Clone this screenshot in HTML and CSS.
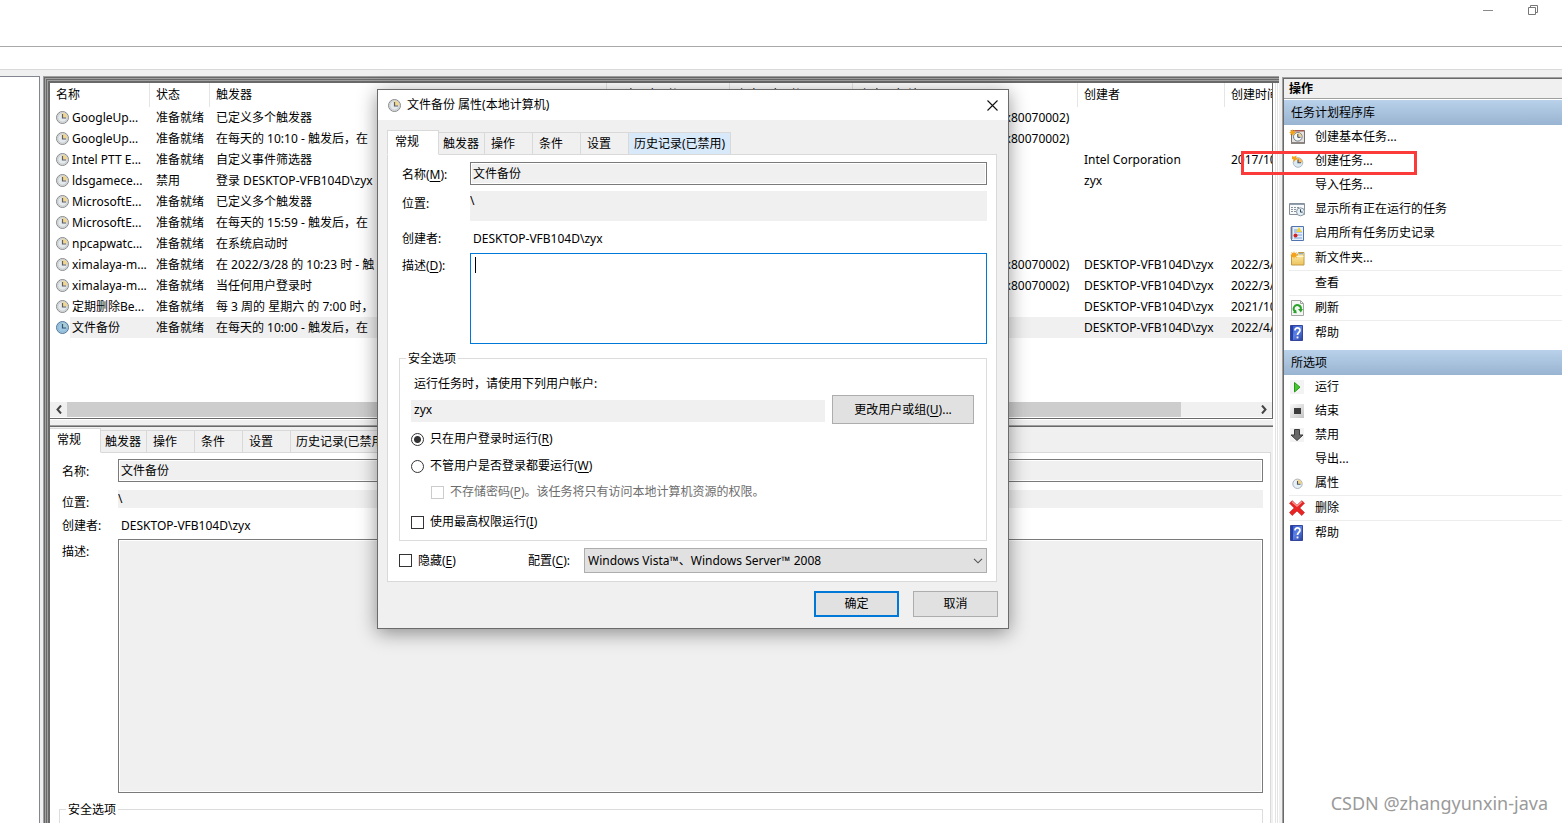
FILE: index.html
```html
<!DOCTYPE html>
<html lang="zh-CN">
<head>
<meta charset="utf-8">
<title>任务计划程序</title>
<link rel="stylesheet" href="styles.css">
</head>
<body>
<svg class="defs" width="0" height="0" aria-hidden="true">
  <linearGradient id="gold" x1="0" y1="0" x2="0" y2="1"><stop offset="0" stop-color="#fdf0b8"/><stop offset="1" stop-color="#eec35a"/></linearGradient>
  <linearGradient id="blue" x1="0" y1="0" x2="1" y2="1"><stop offset="0" stop-color="#2b50c8"/><stop offset=".5" stop-color="#5b82e4"/><stop offset="1" stop-color="#2a3f9c"/></linearGradient>
  <linearGradient id="grey" x1="0" y1="0" x2="1" y2="1"><stop offset="0" stop-color="#fafafa"/><stop offset="1" stop-color="#c4c4c4"/></linearGradient>
  <symbol id="clock" viewBox="0 0 13 13"><circle cx="6.500" cy="6.500" r="6" fill="#f0f0f0" stroke="#85888b" stroke-width="1"/><circle cx="6.500" cy="6.500" r="4.800" fill="#e4e9ec" stroke="#b9bcbe" stroke-width=".9"/><path d="M6.500 6.500V1.800A4.700 4.700 0 0 1 11.200 6.500Z" fill="#f3d68a"/><path d="M6.500 3v4h3.500" fill="none" stroke="#5c5f66" stroke-width="1.200"/></symbol>
  <symbol id="clock-blue" viewBox="0 0 13 13"><circle cx="6.500" cy="6.500" r="6" fill="#a9cbe2" stroke="#4f789c" stroke-width="1"/><circle cx="6.500" cy="6.500" r="4.600" fill="#9fc8e4" stroke="#86aecb" stroke-width=".8"/><path d="M6.500 6.500V1.800A4.700 4.700 0 0 1 11.200 6.500Z" fill="#a9cfd4"/><path d="M6.500 3v4h3.500" fill="none" stroke="#35556f" stroke-width="1.200"/></symbol>
  <symbol id="spark" viewBox="0 0 8 8"><path d="M4 0l.8 2.200L7 1l-1 2.200L8 4l-2 .8L7 7 4.800 5.800 4 8l-.8-2.200L1 7l1-2.200L0 4l2-.8L1 1l2.200 1.200z" fill="#f5a21b"/></symbol>
  <symbol id="i-basic" viewBox="0 0 16 16"><path d="M2.500 1.500h13v13h-13z" fill="#e4e1de" stroke="#77706c"/><path d="M2 13h13v2H2z" fill="#8b8682"/><path d="M4 1h11v1.500H4z" fill="#a3584b"/><circle cx="8.800" cy="7.800" r="4.300" fill="#f4f8fa" stroke="#6f7b84"/><path d="M8.800 7.800V4A4 4 0 0 1 12.600 7.800z" fill="#f4d28b"/><path d="M8.800 5v3.300h2.700" fill="none" stroke="#345" stroke-width="1"/><use href="#spark" x="0" y="0" width="7" height="7"/></symbol>
  <symbol id="i-task" viewBox="0 0 16 16"><circle cx="9" cy="9.500" r="4.800" fill="#dcebf3" stroke="#aabac4"/><path d="M9 9.500V5A4.500 4.500 0 0 1 13.500 9.500z" fill="#f4b860"/><path d="M9 6.500v3.300h3" fill="none" stroke="#44505c" stroke-width="1.100"/><path d="M3 3l2 .8L7.500 2.500 7.300 5 10 6 6.500 7 4.500 9.500 4.500 6.500 3 6z" fill="#f5a21b"/></symbol>
  <symbol id="i-running" viewBox="0 0 16 16"><path d="M.5 2.500h15v11H.5z" fill="#f7f9fa" stroke="#85909a"/><path d="M1 3.500h14" stroke="#8fa0b2"/><path d="M2 6.500h2m1 0h2m1 0h2M2 8.500h2m1 0h2M2 10.500h2m1 0h2" stroke="#8c9299"/><circle cx="11.500" cy="10.800" r="4" fill="#e3eff5" stroke="#87959f"/><path d="M11.500 8.300v2.800h2.200" fill="none" stroke="#345"/></symbol>
  <symbol id="i-history" viewBox="0 0 16 16"><path d="M2.500 1.500h12v14h-12z" fill="#e5effa" stroke="#5274ae"/><path d="M5 5h4M5 7h8M5 10h8M5 13h8" stroke="#7ba1d5"/><path d="M10 2l3 5H7.500z" fill="#f2d234"/><circle cx="6.500" cy="10.500" r="2" fill="#d52323"/><path d="M1 3h3M1 5h3M1 7h3M1 9h3M1 11h3M1 13h3" stroke="#7c8490" stroke-width=".9"/></symbol>
  <symbol id="i-folder" viewBox="0 0 16 16"><path d="M2.500 5h6l1-2.500h5.500v12.500H2.500z" fill="url(#gold)" stroke="#c29a46"/><path d="M10 3.800h4" stroke="#5e93c9"/><path d="M3 6.500h11.500" stroke="#fff6cf"/><use href="#spark" x="1" y="1" width="8" height="8"/></symbol>
  <symbol id="i-refresh" viewBox="0 0 16 16"><path d="M2.500.5h9l3 3v12h-12z" fill="#f5f7f5" stroke="#a2a6a2"/><path d="M11.500.5v3h3" fill="none" stroke="#a2a6a2"/><path d="M6.500 11.800A3.600 3.600 0 1 1 11.800 9.500" fill="none" stroke="#29a329" stroke-width="1.900"/><path d="M9 9h5l-2.200 3.500z" fill="#29a329"/><path d="M4 13l3-3.500.8 3.700z" fill="#29a329"/></symbol>
  <symbol id="i-help" viewBox="0 0 16 16"><path d="M1.500.5h12v15h-12z" fill="url(#blue)" stroke="#35469a"/><path d="M2 1h2v14H2z" fill="#243fa8"/><path d="M6 5.500C6 2 11 2.200 11 5.200 11 7.400 8.500 7.400 8.500 10" fill="none" stroke="#fff" stroke-width="1.700"/><path d="M7.600 11.500h1.800v1.900H7.600z" fill="#fff"/></symbol>
  <symbol id="i-run" viewBox="0 0 16 16"><path d="M1 1h14v14H1z" fill="#f3f3f3"/><path d="M5.500 3.500l5.500 4.700-5.500 4.800z" fill="#45c72d" stroke="#26961a"/></symbol>
  <symbol id="i-end" viewBox="0 0 16 16"><path d="M1 1h14v14H1z" fill="url(#grey)"/><path d="M5 5h7v6H5z" fill="#3c3c3c"/></symbol>
  <symbol id="i-disable" viewBox="0 0 16 16"><path d="M1 1h14v14H1z" fill="#f3f3f3"/><path d="M5.500 2.500h5V8H14l-6 5.500L2 8h3.500z" fill="#676767" stroke="#3b3b3b"/></symbol>
  <symbol id="i-prop" viewBox="0 0 16 16"><circle cx="8.500" cy="8.800" r="4.700" fill="#e6f0f5" stroke="#a7b3bb"/><path d="M8.500 8.800V4.500A4.300 4.300 0 0 1 12.800 8.800z" fill="#f4d385"/><path d="M8.500 6v3.200h3" fill="none" stroke="#4c5964" stroke-width="1.100"/></symbol>
  <symbol id="i-delete" viewBox="0 0 16 16"><path d="M3.200.7L8 5.300 12.800.7l2.700 2.500L10.800 8l4.700 4.500-2.700 3L8 11l-4.800 4.500-2.700-3L5.200 8 .5 3.200z" fill="#e82424" stroke="#bc1717" stroke-width=".6"/><path d="M3 1.700l5 4.600 5-4.600" fill="none" stroke="#f79a94" stroke-width="1.200"/></symbol>
</svg>

<header class="titlebar">
  <button class="win-btn" aria-label="最小化"><svg width="10" height="10"><path d="M0 5.500h10" stroke="#8a8a8a"/></svg></button>
  <button class="win-btn" aria-label="还原"><svg width="10" height="10" fill="none" stroke="#777"><path d="M.5 2.500h7v7h-7zM2.500 2.500v-2h7v7h-2"/></svg></button>
</header>
<div class="toolbar"></div>

<main class="workspace">
  <nav class="tree"></nav>

  <section class="center">
    <div class="list">
      <div class="list-view">
        <table class="tasks">
          <colgroup><col class="c-name"><col class="c-state"><col class="c-trigger"><col class="c-run"><col class="c-run"><col class="c-result"><col class="c-author"><col class="c-date"></colgroup>
          <thead><tr><th>名称</th><th>状态</th><th>触发器</th><th>下次运行时间</th><th>上次运行时间</th><th>上次运行结果</th><th>创建者</th><th>创建时间</th></tr></thead>
          <tbody>
            <tr><td><svg class="clock"><use href="#clock"/></svg>GoogleUp...</td><td>准备就绪</td><td>已定义多个触发器</td><td></td><td></td><td>系统找不到指定的文件。 (0x80070002)</td><td></td><td></td></tr>
            <tr><td><svg class="clock"><use href="#clock"/></svg>GoogleUp...</td><td>准备就绪</td><td>在每天的 10:10 - 触发后，在</td><td></td><td></td><td>系统找不到指定的文件。 (0x80070002)</td><td></td><td></td></tr>
            <tr><td><svg class="clock"><use href="#clock"/></svg>Intel PTT E...</td><td>准备就绪</td><td>自定义事件筛选器</td><td></td><td></td><td></td><td>Intel Corporation</td><td>2017/10/9</td></tr>
            <tr><td><svg class="clock"><use href="#clock"/></svg>ldsgamece...</td><td>禁用</td><td>登录 DESKTOP-VFB104D\zyx</td><td></td><td></td><td></td><td>zyx</td><td></td></tr>
            <tr><td><svg class="clock"><use href="#clock"/></svg>MicrosoftE...</td><td>准备就绪</td><td>已定义多个触发器</td><td></td><td></td><td></td><td></td><td></td></tr>
            <tr><td><svg class="clock"><use href="#clock"/></svg>MicrosoftE...</td><td>准备就绪</td><td>在每天的 15:59 - 触发后，在</td><td></td><td></td><td></td><td></td><td></td></tr>
            <tr><td><svg class="clock"><use href="#clock"/></svg>npcapwatc...</td><td>准备就绪</td><td>在系统启动时</td><td></td><td></td><td></td><td></td><td></td></tr>
            <tr><td><svg class="clock"><use href="#clock"/></svg>ximalaya-m...</td><td>准备就绪</td><td>在 2022/3/28 的 10:23 时 - 触</td><td></td><td></td><td>系统找不到指定的文件。 (0x80070002)</td><td>DESKTOP-VFB104D\zyx</td><td>2022/3/28</td></tr>
            <tr><td><svg class="clock"><use href="#clock"/></svg>ximalaya-m...</td><td>准备就绪</td><td>当任何用户登录时</td><td></td><td></td><td>系统找不到指定的文件。 (0x80070002)</td><td>DESKTOP-VFB104D\zyx</td><td>2022/3/28</td></tr>
            <tr><td><svg class="clock"><use href="#clock"/></svg>定期删除Be...</td><td>准备就绪</td><td>每 3 周的 星期六 的 7:00 时，</td><td></td><td></td><td></td><td>DESKTOP-VFB104D\zyx</td><td>2021/10/9</td></tr>
            <tr class="selected"><td><svg class="clock"><use href="#clock-blue"/></svg>文件备份</td><td>准备就绪</td><td>在每天的 10:00 - 触发后，在</td><td></td><td></td><td></td><td>DESKTOP-VFB104D\zyx</td><td>2022/4/1</td></tr>
          </tbody>
        </table>
      </div>
      <div class="scrollbar">
        <button aria-label="向左"><svg width="6" height="9"><path d="M5 .5L1.500 4.500 5 8.500" fill="none" stroke="#444" stroke-width="2"/></svg></button>
        <div class="track"><div class="thumb"></div></div>
        <button aria-label="向右"><svg width="6" height="9"><path d="M1 .5L4.500 4.500 1 8.500" fill="none" stroke="#444" stroke-width="2"/></svg></button>
      </div>
    </div>

    <div class="detail">
      <div class="tabs">
        <button class="tab active">常规</button><button class="tab snug">触发器</button><button class="tab">操作</button><button class="tab">条件</button><button class="tab">设置</button><button class="tab wide">历史记录(已禁用)</button>
      </div>
      <div class="detail-panel">
        <div class="detail-form">
          <label for="d-name">名称:</label><input id="d-name" class="field" readonly value="文件备份">
          <label for="d-loc">位置:</label><input id="d-loc" class="flat" readonly value="\">
          <span>创建者:</span><span class="author">DESKTOP-VFB104D\zyx</span>
          <label for="d-desc">描述:</label><textarea id="d-desc" class="field" readonly></textarea>
        </div>
        <fieldset class="detail-security"><legend>安全选项</legend></fieldset>
      </div>
    </div>
  </section>

  <aside class="actions">
    <h2 class="actions-title">操作</h2>
    <h3 class="group">任务计划程序库</h3>
    <ul>
      <li><a href="#"><svg><use href="#i-basic"/></svg>创建基本任务...</a></li>
      <li><a href="#"><svg><use href="#i-task"/></svg>创建任务...</a></li>
      <li><a href="#"><svg></svg>导入任务...</a></li>
      <li><a href="#"><svg><use href="#i-running"/></svg>显示所有正在运行的任务</a></li>
      <li><a href="#"><svg><use href="#i-history"/></svg>启用所有任务历史记录</a></li>
      <li class="sep"><a href="#"><svg><use href="#i-folder"/></svg>新文件夹...</a></li>
      <li class="sep"><a href="#"><svg></svg>查看</a></li>
      <li class="sep"><a href="#"><svg><use href="#i-refresh"/></svg>刷新</a></li>
      <li class="sep"><a href="#"><svg><use href="#i-help"/></svg>帮助</a></li>
    </ul>
    <h3 class="group">所选项</h3>
    <ul>
      <li><a href="#"><svg><use href="#i-run"/></svg>运行</a></li>
      <li><a href="#"><svg><use href="#i-end"/></svg>结束</a></li>
      <li><a href="#"><svg><use href="#i-disable"/></svg>禁用</a></li>
      <li><a href="#"><svg></svg>导出...</a></li>
      <li><a href="#"><svg><use href="#i-prop"/></svg>属性</a></li>
      <li class="sep"><a href="#"><svg><use href="#i-delete"/></svg>删除</a></li>
      <li class="sep"><a href="#"><svg><use href="#i-help"/></svg>帮助</a></li>
    </ul>
  </aside>
</main>

<form class="dialog" role="dialog" aria-labelledby="dlg-title">
  <div class="dialog-title">
    <svg class="clock"><use href="#clock"/></svg>
    <span id="dlg-title">文件备份 属性(本地计算机)</span>
    <button type="button" class="close" aria-label="关闭"><svg width="11" height="11"><path d="M.5.5l10 10M10.500.5l-10 10" stroke="#111" stroke-width="1.100"/></svg></button>
  </div>
  <div class="dialog-body">
    <div class="tabs">
      <button type="button" class="tab active">常规</button><button type="button" class="tab snug">触发器</button><button type="button" class="tab">操作</button><button type="button" class="tab">条件</button><button type="button" class="tab">设置</button><button type="button" class="tab wide hover">历史记录(已禁用)</button>
    </div>
    <div class="dialog-panel">
      <div class="dialog-form">
        <label for="p-name">名称(<u>M</u>):</label><input id="p-name" class="field" readonly value="文件备份">
        <label for="p-loc">位置:</label><input id="p-loc" class="flat" readonly value="\">
        <span>创建者:</span><span class="author">DESKTOP-VFB104D\zyx</span>
        <label for="p-desc">描述(<u>D</u>):</label>
        <div class="desc"><textarea id="p-desc"></textarea><i class="caret"></i></div>
      </div>
      <fieldset class="security">
        <legend>安全选项</legend>
        <label for="p-user" class="hint">运行任务时，请使用下列用户帐户:</label>
        <div class="user-row"><input id="p-user" class="flat" readonly value="zyx"><button type="button" class="btn">更改用户或组(<u>U</u>)...</button></div>
        <label class="check"><input type="radio" name="mode" checked>只在用户登录时运行(<u>R</u>)</label>
        <label class="check"><input type="radio" name="mode">不管用户是否登录都要运行(<u>W</u>)</label>
        <label class="check nested"><input type="checkbox" disabled>不存储密码(<u>P</u>)。该任务将只有访问本地计算机资源的权限。</label>
        <label class="check elevated"><input type="checkbox">使用最高权限运行(<u>I</u>)</label>
      </fieldset>
      <div class="config">
        <label class="check"><input type="checkbox">隐藏(<u>E</u>)</label>
        <label for="p-conf" class="config-label">配置(<u>C</u>):</label>
        <div class="select"><select id="p-conf"><option>Windows Vista™、Windows Server™ 2008</option></select><svg width="10" height="6"><path d="M1 .8l4 4 4-4" fill="none" stroke="#555" stroke-width="1.100"/></svg></div>
      </div>
    </div>
    <div class="dialog-buttons"><button type="button" class="btn primary">确定</button><button type="button" class="btn">取消</button></div>
  </div>
</form>

<div class="highlight"></div>
<div class="watermark">CSDN @zhangyunxin-java</div>
</body>
</html>
```

FILE: styles.css
```css
* { box-sizing: border-box; }

body {
  margin: 0;
  height: 100vh;
  overflow: hidden;
  position: relative;
  display: flex;
  flex-direction: column;
  background: #fff;
  color: #000;
  font: 12px/16px "Noto Sans", "Noto Sans CJK SC", sans-serif;
}

button, input, select, textarea { font: inherit; color: inherit; margin: 0; border-radius: 0; }
button { padding: 0; border: 0; background: none; }
input, textarea { outline: 0; }
u { text-underline-offset: 2px; }
.defs { position: absolute; }
.clock { width: 13px; height: 13px; flex: none; }

/* window chrome */
.titlebar {
  flex: none;
  height: 47px;
  border-bottom: 1px solid #a9a9a9;
  display: flex;
  justify-content: flex-end;
  align-items: flex-start;
  padding-right: 7px;
}
.win-btn { width: 45px; height: 20px; display: flex; align-items: center; justify-content: center; }
.toolbar { flex: none; height: 23px; border-bottom: 1px solid #d9d9d9; }

.workspace {
  flex: 1;
  min-height: 0;
  display: grid;
  grid-template-columns: 40px minmax(0, 1fr) 280px;
  column-gap: 3px;
  padding-top: 6px;
  background: #f0f0f0;
}
.tree { background: #fff; border: 1px solid #828790; border-width: 1px 1px 0 0; }

.center {
  min-height: 0;
  overflow: hidden;
  padding: 7px 6px 0 7px;
  display: flex;
  flex-direction: column;
  box-shadow:
    inset 1px 1px #a0a0a0, inset 2px 2px #696969, inset 3px 3px #a0a0a0,
    inset 4px 4px #696969, inset 5px 5px #a0a0a0, inset 6px 6px #696969, inset 7px 7px #696969,
    inset -1px 0 #fff, inset -2px 0 #e3e3e3, inset -3px 0 #fff, inset -4px 0 #e3e3e3, inset -5px 0 #fff, inset -6px 0 #fff;
}

/* task list */
.list {
  flex: none;
  background: #fff;
  border: 1px solid #696969;
  border-width: 0 1px 1px 0;
  box-shadow: 0 1px #fff;
}
.list-view { height: 319px; overflow: hidden; }
.tasks { width: 1270px; border-collapse: separate; border-spacing: 0; table-layout: fixed; }
.c-name { width: 100px; }
.c-state { width: 60px; }
.c-trigger { width: 397px; }
.c-run { width: 123px; }
.c-result { width: 225px; }
.c-author { width: 147px; }
.tasks th, .tasks td { padding: 0 0 0 6px; white-space: nowrap; overflow: hidden; text-align: left; font-weight: 400; }
.tasks th { height: 24px; border-right: 1px solid #e5e5e5; }
.tasks td { height: 21px; }
.tasks td .clock { vertical-align: -2px; margin-right: 3px; }
.tasks .selected td { background: #f0f0f0; }
.tasks .selected td:first-child { background: linear-gradient(to right, #fff 20px, #f0f0f0 20px); }

.scrollbar { height: 16px; display: flex; background: #f0f0f0; border-bottom: 1px solid #fff; }
.scrollbar button { width: 17px; display: flex; align-items: center; justify-content: center; }
.track { flex: 1; }
.thumb { width: 93.75%; height: 100%; background: #cdcdcd; }

/* tabs */
.tabs { display: flex; align-items: flex-end; height: 25px; margin-bottom: -1px; position: relative; }
.tab {
  width: 48px;
  height: 23px;
  padding: 1px 0 0 6px;
  text-align: left;
  white-space: nowrap;
  background: #f0f0f0;
  border: 1px solid #d9d9d9;
  border-left-width: 0;
}
.tab.active { width: 52px; height: 25px; padding: 0 0 2px 7px; background: #fff; border-left-width: 1px; border-bottom-color: #fff; }
.tab.snug { width: 46px; padding-left: 4px; }
.tab.wide { width: 102px; padding-left: 5px; }
.tab.hover { background: #d8e9f9; }

/* fields */
.field { width: 100%; min-width: 0; height: 23px; padding: 0 2px 1px; border: 1px solid #7a7a7a; background: #f0f0f0; box-shadow: inset 0 0 0 1px #fff; }
.flat { width: 100%; min-width: 0; border: 0; padding: 0; background: #f0f0f0; }
textarea { display: block; resize: none; }
fieldset { margin: 0; border: 1px solid #dcdcdc; min-width: 0; }
legend { padding: 1px 2px 0; height: 16px; }

.detail { flex: 1; min-height: 0; margin-top: 7px; padding-top: 1px; border-top: 1px solid #696969; box-shadow: 0 -1px #a0a0a0; background: #f0f0f0; padding-right: 2px; }
.detail-panel { background: #fff; border: 1px solid #d9d9d9; border-left: 0; padding: 6px 7px 0 9px; height: 100%; }
.detail .tab.active { width: 51px; border-left-width: 0; }
.detail-form { display: grid; grid-template-columns: 56px 1fr; grid-template-rows: 31px 18px 31px 254px; padding-left: 3px; }
.detail-form > label, .detail-form > span { padding-top: 5px; }
.detail-form > span { padding-top: 10px; }
.detail-form .author { padding-left: 3px; }
.detail-form textarea { height: 100%; }
.detail-security { margin-top: 8px; height: 60px; padding: 0 7px; }
.detail-security legend { margin-left: -1px; }

/* actions pane */
.actions { background: #fff; border: 1px solid #a0a0a0; border-width: 1px 0 0 1px; margin-top: 1px; box-shadow: inset 1px 1px #696969; padding: 1px 0 0 1px; min-height: 0; overflow: hidden; }
.actions-title { margin: 0 0 1px; height: 20px; padding: 2px 0 0 5px; background: #f0f0f0; border-bottom: 1px solid #a0a0a0; font-size: 12px; line-height: 16px; font-weight: 700; }
.group { margin: 0; height: 25px; padding: 5px 7px; background: linear-gradient(#b9d1ea, #99b4d1); font-size: 12px; line-height: 16px; font-weight: 400; }
.actions ul { margin: 0 0 5px; padding: 0 0 0 5px; list-style: none; }
.actions a { display: flex; align-items: center; gap: 10px; height: 24px; color: #000; text-decoration: none; }
.actions a svg { width: 16px; height: 16px; }
.actions .sep { border-top: 1px solid #ededed; }

/* properties dialog */
.dialog {
  position: absolute;
  left: 377px;
  top: 89px;
  width: 632px;
  background: #f0f0f0;
  border: 1px solid #6b6b6b;
  box-shadow: 0 4px 18px rgba(0, 0, 0, .42);
}
.dialog-title { height: 30px; background: #fff; display: flex; align-items: center; gap: 6px; padding: 0 10px; }
.close { margin-left: auto; display: flex; }
.dialog-body { padding: 10px 10px 11px 9px; }
.dialog-panel { margin-right: 1px; padding: 7px 9px 8px 11px; background: #fff; border: 1px solid #d9d9d9; }
.dialog-form { display: grid; grid-template-columns: 68px 1fr; grid-template-rows: 29px 30px 32px 91px; padding-left: 3px; }
.dialog-form > label, .dialog-form > span { padding-top: 5px; }
.dialog-form > span { padding-top: 10px; }
.dialog-form .author { padding-left: 3px; }
.dialog-form .flat { padding-bottom: 10px; }
.desc { position: relative; }
.desc textarea { width: 100%; height: 100%; border: 1px solid #0078d7; background: #fff; }
.caret { position: absolute; left: 5px; top: 4px; width: 1px; height: 16px; background: #000; }

.security { margin-top: 6px; padding: 10px 12px 10px 11px; display: flex; flex-direction: column; }
.security legend { margin-left: -5px; }
.hint { padding-left: 3px; }
.user-row { display: flex; gap: 7px; margin: 3px 0 7px; }
.user-row .flat { flex: 1; height: 22px; margin-top: 5px; padding: 0 3px 4px; }
.btn { width: 85px; height: 26px; background: #e1e1e1; border: 1px solid #adadad; }
.user-row .btn { width: 142px; height: 29px; }
.btn.primary { border: 2px solid #0078d7; }

.check { display: flex; align-items: center; height: 16px; white-space: nowrap; }
.check + .check { margin-top: 11px; }
.check input { appearance: none; width: 13px; height: 13px; margin-right: 6px; border: 1px solid #333; background: #fff; flex: none; }
.check input[type="radio"] { border-radius: 50%; }
.check input[type="radio"]:checked { background: radial-gradient(circle, #333 3px, #fff 4px); }
.check input:disabled { border-color: #ccc; }
.check.nested { margin-left: 20px; margin-top: 10px; color: #6d6d6d; }
.check.elevated { margin-top: 14px; }

.config { display: flex; align-items: center; height: 25px; margin-top: 7px; }
.config .check { width: 129px; }
.config-label { width: 56px; }
.select { flex: 1; height: 25px; position: relative; }
.select select { appearance: none; width: 100%; height: 100%; padding: 0 3px; background: #e1e1e1; border: 1px solid #adadad; }
.select svg { position: absolute; right: 4px; top: 10px; pointer-events: none; }
.dialog-buttons { display: flex; justify-content: flex-end; gap: 14px; margin-top: 9px; }

/* overlays */
.highlight { position: absolute; left: 1241px; top: 151px; width: 176px; height: 24px; border: 3px solid #fb3a3a; }
.watermark { position: absolute; right: 14px; bottom: 8px; font-size: 18px; line-height: 24px; color: #9a9a9a; }
```
